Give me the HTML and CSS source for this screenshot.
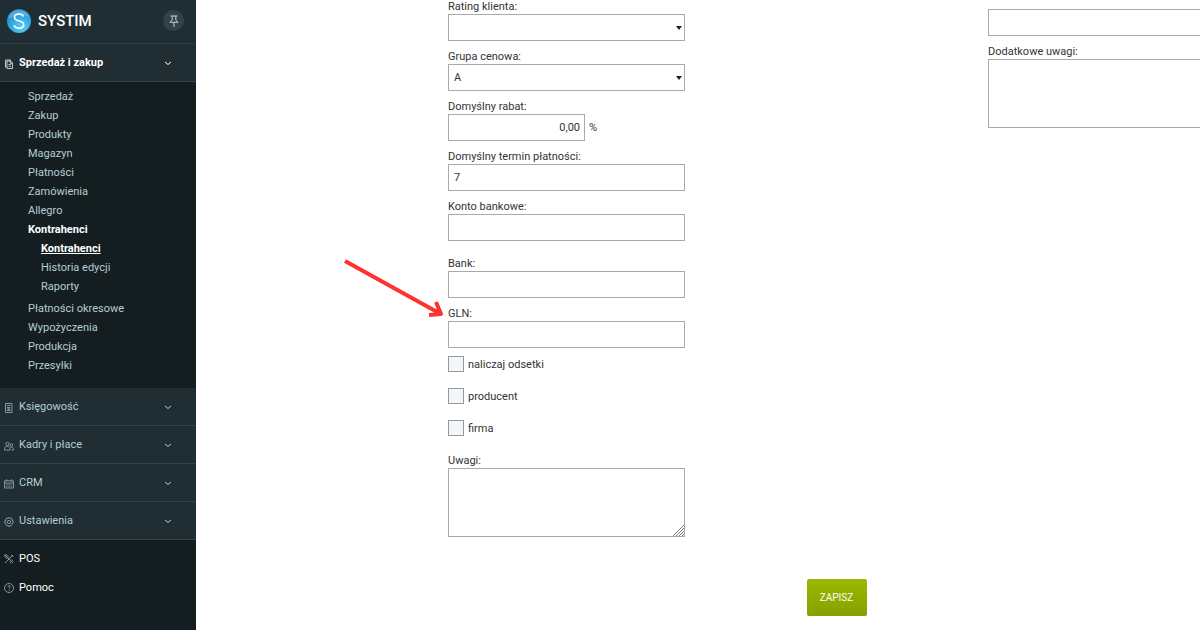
FILE: index.html
```html
<!DOCTYPE html>
<html lang="pl">
  <head>
    <meta charset="UTF-8" />
    <meta name="viewport" content="width=device-width, initial-scale=1.0" />
    <title>Systim</title>
    <link rel="stylesheet" href="styles.css">
  </head>
  <body>
    <aside class="sidebar">
      <div class="brand">
        <svg class="logo" viewBox="0 0 24 24" aria-hidden="true">
          <defs>
            <radialGradient id="ball" cx="0.6" cy="0.75" r="0.75">
              <stop offset="0" stop-color="#62cdf5" />
              <stop offset="0.5" stop-color="#35aee6" />
              <stop offset="1" stop-color="#1f86c8" />
            </radialGradient>
          </defs>
          <circle cx="12" cy="12" r="12" fill="url(#ball)" />
          <path d="M1.500 10C2 4 7 1 12 1s9 3 10.500 7C17 5 7 6 1.500 10z" fill="#fff" opacity="0.22" />
          <path d="M16.500 7.500C15.500 5.700 14 5 12 5 9.300 5 7.500 6.500 7.500 8.500c0 4.600 9.300 2.400 9.300 7 0 2.200-2 3.700-4.800 3.700-2.300 0-4-.900-5-2.800" fill="none" stroke="#fff" stroke-width="1.500" />
        </svg>
        <span class="brand-name">SYSTIM</span>
        <button class="pin" aria-label="Przypnij menu">
          <svg viewBox="0 0 12 12"><path d="M2.500 1h7M4.200 1v4L2 7.300h8L7.800 5V1M6 7.300V12" /></svg>
        </button>
      </div>

      <nav>
        <a class="section active" href="#">
          <svg class="icon" viewBox="0 0 10 10"><path d="M2.500 8.300H1.500V1h5v1M3 2h3.500l2 2v5.500H3zM6.300 2v2.300h2.200M4.500 5.500h2.500M4.500 7.300h2.500" /></svg>
          <span>Sprzedaż i zakup</span>
          <svg class="chevron" viewBox="0 0 8 8"><path d="M1 3l3 2.500L7 3" /></svg>
        </a>
        <ul class="submenu">
          <li><a href="#">Sprzedaż</a></li>
          <li><a href="#">Zakup</a></li>
          <li><a href="#">Produkty</a></li>
          <li><a href="#">Magazyn</a></li>
          <li><a href="#">Płatności</a></li>
          <li><a href="#">Zamówienia</a></li>
          <li><a href="#">Allegro</a></li>
          <li>
            <a class="current" href="#">Kontrahenci</a>
            <ul class="nested">
              <li><a class="current underline" href="#">Kontrahenci</a></li>
              <li><a href="#">Historia edycji</a></li>
              <li><a href="#">Raporty</a></li>
            </ul>
          </li>
          <li><a href="#">Płatności okresowe</a></li>
          <li><a href="#">Wypożyczenia</a></li>
          <li><a href="#">Produkcja</a></li>
          <li><a href="#">Przesyłki</a></li>
        </ul>
        <a class="section" href="#">
          <svg class="icon" viewBox="0 0 10 10"><path d="M1.500.500h6.500v9H1.500zM3 2.500h3.500M3 4.500h3.500M3 6h3.500M3 7.500h3.500M4.800 4v4" /></svg>
          <span>Księgowość</span>
          <svg class="chevron" viewBox="0 0 8 8"><path d="M1 3l3 2.500L7 3" /></svg>
        </a>
        <a class="section" href="#">
          <svg class="icon" viewBox="0 0 10 10"><circle cx="3.500" cy="3" r="1.700" /><circle cx="7.500" cy="4" r="1.300" /><path d="M.500 9V7.500C.500 6 2 5.500 3.500 5.500S6 6 6 7.500V9zM6.500 6.300c1.800-.400 3 .200 3 1.500V9H7.500" /></svg>
          <span>Kadry i płace</span>
          <svg class="chevron" viewBox="0 0 8 8"><path d="M1 3l3 2.500L7 3" /></svg>
        </a>
        <a class="section" href="#">
          <svg class="icon" viewBox="0 0 10 10"><path d="M.500 1.800h9v7.200h-9zM.500 4h9M2.500.300v2M7.500.300v2" /><path d="M2 5.700h6M2 7.300h6" stroke-dasharray="1 .6" /></svg>
          <span>CRM</span>
          <svg class="chevron" viewBox="0 0 8 8"><path d="M1 3l3 2.500L7 3" /></svg>
        </a>
        <a class="section" href="#">
          <svg class="icon" viewBox="0 0 10 10"><path d="M4.300.500h1.400l.300 1.200 1.200-.700 1.200 1.100-.600 1.200 1.500.700v1.700l-1.500.500.600 1.200L7.200 8.700 6 8.200l-.300 1.300H4.300L4 8.200l-1.200.500L1.600 7.400l.600-1.200L.700 5.700V4l1.500-.700-.600-1.200L2.800 1l1.200.700z" /><circle cx="5" cy="5" r="1.600" /></svg>
          <span>Ustawienia</span>
          <svg class="chevron" viewBox="0 0 8 8"><path d="M1 3l3 2.500L7 3" /></svg>
        </a>
        <div class="extra">
          <a href="#">
            <svg class="icon" viewBox="0 0 10 10"><path d="M1 1l8 8M2.500.800l2.500 2.500M.800 2.500l2.500 2.500M.800.800h1.700M.800.800v1.700M9 1L1 9M7.200.800l2 2M5.500 7.500L7 9.200M7.500 5.500L9.200 7" /></svg>
            <span>POS</span>
          </a>
          <a href="#">
            <svg class="icon" viewBox="0 0 10 10"><circle cx="5" cy="5" r="4.500" /><path d="M3.800 4c0-1.600 2.500-1.600 2.500 0C6.300 5 5 4.800 5 6M5 6.900v.900" /></svg>
            <span>Pomoc</span>
          </a>
        </div>
      </nav>
    </aside>

    <main>
      <form class="client-form">
        <div class="left-col">
          <div class="field">
            <label for="rating">Rating klienta:</label>
            <div class="select"><select id="rating"><option></option></select></div>
          </div>
          <div class="field">
            <label for="group">Grupa cenowa:</label>
            <div class="select"><select id="group"><option>A</option></select></div>
          </div>
          <div class="field">
            <label for="discount">Domyślny rabat:</label>
            <div class="discount"><input type="text" id="discount" value="0,00" /><span>%</span></div>
          </div>
          <div class="field">
            <label for="term">Domyślny termin płatności:</label>
            <input type="text" id="term" value="7" />
          </div>
          <div class="field">
            <label for="account">Konto bankowe:</label>
            <input type="text" id="account" />
          </div>
          <div class="field bank">
            <label for="bank">Bank:</label>
            <input type="text" id="bank" />
          </div>
          <div class="field gln">
            <label for="gln">GLN:</label>
            <input type="text" id="gln" />
            <svg class="arrow" viewBox="0 0 106 64" aria-hidden="true"><path d="M4 5L98 57M95 46L100 58L88 59" /></svg>
          </div>
          <div class="checks">
            <label><input type="checkbox" />naliczaj odsetki</label>
            <label><input type="checkbox" />producent</label>
            <label><input type="checkbox" />firma</label>
          </div>
          <div class="field notes">
            <label for="notes">Uwagi:</label>
            <textarea id="notes"></textarea>
            <svg class="grip" viewBox="0 0 12 12" aria-hidden="true"><path d="M1 12L12 1M4 12l8-8M7 12l5-5M10 12l2-2" /></svg>
          </div>
        </div>
        <div class="right-col">
          <input type="text" aria-label="Uwagi" />
          <div class="field">
            <label for="more">Dodatkowe uwagi:</label>
            <textarea id="more"></textarea>
          </div>
        </div>
        <button class="save" type="submit">ZAPISZ</button>
      </form>
    </main>
  </body>
</html>
```
FILE: styles.css
```css
* {
  box-sizing: border-box;
}

body {
  margin: 0;
  min-height: 100vh;
  display: flex;
  font-family: Roboto, sans-serif;
  font-size: 11px;
  color: #333;
  background-color: #fff;
  overflow-x: hidden;
}

a {
  color: inherit;
  text-decoration: none;
}

ul {
  list-style: none;
  margin: 0;
  padding: 0;
}

svg {
  fill: none;
  stroke: currentColor;
}

.sidebar {
  flex: 0 0 196px;
  background-color: #141e20;
  color: #b4cdd5;
}

.brand {
  display: flex;
  align-items: center;
  height: 44px;
  padding: 0 12px 2px 7px;
  background-color: #202d32;
  border-bottom: 1px solid #2b3e43;
}

.logo {
  width: 24px;
  height: 24px;
  stroke: none;
}

.brand-name {
  flex: 1;
  margin-left: 7px;
  font-size: 15px;
  font-weight: 500;
  color: #fff;
}

.pin {
  display: flex;
  align-items: center;
  justify-content: center;
  width: 21px;
  height: 21px;
  padding: 0;
  border: none;
  border-radius: 50%;
  background-color: #30434a;
  color: #c3d2d6;
}

.pin svg {
  width: 12px;
  height: 12px;
}

.section {
  display: flex;
  align-items: center;
  gap: 5px;
  height: 38px;
  padding: 0 24px 0 4px;
  background-color: #202d32;
  border-bottom: 1px solid #2f4348;
}

.section span {
  flex: 1;
}

.section.active {
  font-weight: bold;
  color: #fff;
}

.icon {
  width: 10px;
  height: 10px;
  margin-top: 2px;
  color: #7f979f;
}

.active .icon {
  color: #c0cdd1;
}

.chevron {
  width: 8px;
  height: 8px;
}

.submenu {
  padding: 5px 0 13px 28px;
  line-height: 19px;
}

.submenu a {
  display: block;
}

.nested {
  padding-left: 13px;
  margin-bottom: 3px;
}

.submenu .current {
  font-weight: bold;
  color: #fff;
}

.submenu .underline {
  text-decoration: underline;
}

.extra {
  padding: 4px;
  color: #fff;
}

.extra a {
  display: flex;
  align-items: center;
  gap: 5px;
  height: 29px;
}

.extra .icon {
  margin-top: 0;
}

main {
  flex: 1;
  min-width: 0;
}

.client-form {
  display: grid;
  grid-template-columns: minmax(0, 252fr) 237px minmax(0, 303fr) minmax(0, 212fr);
  row-gap: 42px;
}

.left-col {
  grid-column: 2;
  display: flex;
  flex-direction: column;
  gap: 9px;
}

.right-col {
  grid-column: 4;
  padding-top: 9px;
  display: flex;
  flex-direction: column;
  gap: 9px;
}

.field {
  display: flex;
  flex-direction: column;
}

.field > label {
  line-height: 13px;
  padding-bottom: 1px;
}

input[type="text"],
select,
textarea {
  display: block;
  width: 100%;
  height: 27px;
  margin: 0;
  padding: 0 5px;
  border: 1px solid #aaa;
  border-radius: 0;
  background-color: #fff;
  font-family: inherit;
  font-size: 11px;
  color: #333;
  appearance: none;
}

textarea {
  height: 69px;
  resize: none;
}

.select {
  position: relative;
}

.select::after {
  content: "";
  position: absolute;
  right: 3px;
  top: 12px;
  border: 3px solid transparent;
  border-top: 4px solid #222;
  border-bottom: none;
  pointer-events: none;
}

.discount {
  display: flex;
  align-items: center;
  gap: 4px;
}

.discount input[type="text"] {
  width: 137px;
  padding: 0 4px;
  text-align: right;
}

.bank {
  margin-top: 7px;
}

.gln,
.notes {
  position: relative;
}

.arrow {
  position: absolute;
  right: 238px;
  bottom: 28px;
  width: 106px;
  height: 64px;
  stroke: #ff3131;
  stroke-width: 4;
  stroke-linejoin: round;
}

.checks {
  display: flex;
  flex-direction: column;
  gap: 16px;
  margin: -1px 0 9px;
}

.checks label {
  display: flex;
  align-items: center;
  gap: 4px;
  height: 16px;
}

.checks input {
  appearance: none;
  width: 16px;
  height: 16px;
  margin: 0;
  border: 1px solid #999;
  background-color: #f0f6f9;
}

.grip {
  position: absolute;
  right: 1px;
  bottom: 1px;
  width: 12px;
  height: 12px;
  stroke: #777;
  pointer-events: none;
}

.right-col input,
.right-col textarea {
  border-right: none;
}

.save {
  grid-column: 3;
  justify-self: center;
  width: 60px;
  height: 37px;
  padding: 0;
  border: none;
  border-radius: 2px;
  background: linear-gradient(#9ab800, #86a000);
  color: #fff;
  font-family: inherit;
  font-size: 10px;
}
```
